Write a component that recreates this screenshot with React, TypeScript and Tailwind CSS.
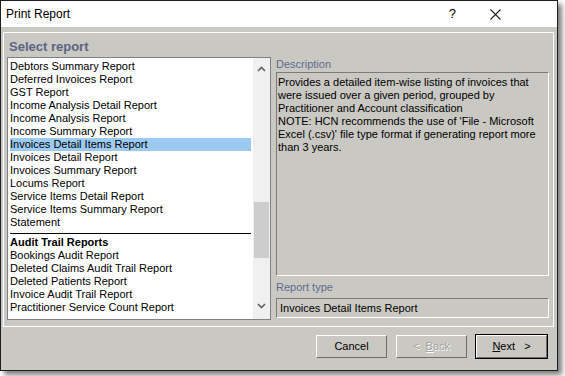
import React from "react";

const items1 = [
  "Debtors Summary Report",
  "Deferred Invoices Report",
  "GST Report",
  "Income Analysis Detail Report",
  "Income Analysis Report",
  "Income Summary Report",
  "Invoices Detail Items Report",
  "Invoices Detail Report",
  "Invoices Summary Report",
  "Locums Report",
  "Service Items Detail Report",
  "Service Items Summary Report",
  "Statement",
];
const items2 = [
  "Bookings Audit Report",
  "Deleted Claims Audit Trail Report",
  "Deleted Patients Report",
  "Invoice Audit Trail Report",
  "Practitioner Service Count Report",
];

const font = { fontFamily: '"Liberation Sans", Arial, sans-serif' };

function Btn({ children, def, disabled }: { children: React.ReactNode; def?: boolean; disabled?: boolean }) {
  return (
    <div
      className={
        "w-[73px] h-[25px] " +
        (def ? "border border-black" : "border border-transparent")
      }
    >
      <div className="w-full h-full border-t border-l border-t-white border-l-white border-b border-r border-b-[#6d6d6d] border-r-[#6d6d6d] flex items-center justify-center text-[11px] leading-[13px]">
        <span className={disabled ? "text-[#a3a3a0] [text-shadow:1px_1px_0_#ffffff]" : "text-black"}>{children}</span>
      </div>
    </div>
  );
}

export default function App() {
  return (
    <div className="w-[565px] h-[376px] bg-white" style={font}>
      <div className="w-[558px] h-[371px] border border-[#1e1e1e] bg-[#c9c8c2] shadow-[4px_4px_5px_rgba(0,0,0,0.5)] flex flex-col">
        {/* Title bar */}
        <div className="h-[26px] bg-white flex items-center text-[12px] text-black">
          <span className="ml-[5px]">Print Report</span>
          <span className="ml-auto mr-[34px] text-[13px]">?</span>
          <svg width="11" height="11" viewBox="0 0 11 11" className="mr-[56px]">
            <path d="M0.5 0.5 L10.5 10.5 M10.5 0.5 L0.5 10.5" stroke="#222" strokeWidth="1.1" />
          </svg>
        </div>
        <div className="pt-[5px] px-[2px]">
          {/* Panel */}
          <div className="w-[551px] h-[295px] border border-white flex flex-col">
            <div className="h-[24px] pt-[6px] pl-[5px] text-[13px] leading-[16px] font-bold text-[#5a6483]">
              Select report
            </div>
            <div className="flex pl-[3px] gap-[5px]">
              {/* List */}
              <div className="w-[264px] h-[263px] border border-[#7f8287] bg-white flex">
                <div className="flex-1 overflow-hidden pl-[2px] pr-[2px] pt-[2px] text-[11px] leading-[13px] text-black">
                  {items1.map((t) => (
                    <div
                      key={t}
                      className={"h-[13px] whitespace-nowrap " + (t === "Invoices Detail Items Report" ? "bg-[#9ccaf3]" : "")}
                    >
                      {t}
                    </div>
                  ))}
                  <div className="h-[7px] pt-[4px]">
                    <div className="h-px bg-black" />
                  </div>
                  <div className="h-[13px] font-bold whitespace-nowrap">Audit Trail Reports</div>
                  {items2.map((t) => (
                    <div key={t} className="h-[13px] whitespace-nowrap">
                      {t}
                    </div>
                  ))}
                </div>
                <div className="w-[17px] bg-[#f0f0f0] flex flex-col items-center">
                  <svg width="9" height="6" viewBox="0 0 9 6" className="mt-[8px]">
                    <path d="M1 5 L4.5 1.5 L8 5" stroke="#606060" strokeWidth="1.6" fill="none" />
                  </svg>
                  <div className="w-[15px] h-[56px] bg-[#cdcdcd] mt-[130px]" />
                  <svg width="9" height="6" viewBox="0 0 9 6" className="mt-[45px]">
                    <path d="M1 1 L4.5 4.5 L8 1" stroke="#606060" strokeWidth="1.6" fill="none" />
                  </svg>
                </div>
              </div>
              {/* Right column */}
              <div className="w-[273px] flex flex-col text-[11px] leading-[13px]">
                <div className="h-[15px] pt-[1px] text-[#5f6c8f]">Description</div>
                <div className="h-[204px] border-t border-l border-t-[#7b7b7b] border-l-[#7b7b7b] border-b border-r border-b-white border-r-white pl-[1px] pt-[3px] text-black whitespace-nowrap">
                  <div>Provides a detailed item-wise listing of invoices that</div>
                  <div>were issued over a given period, grouped by</div>
                  <div>Practitioner and Account classification</div>
                  <div>NOTE: HCN recommends the use of 'File - Microsoft</div>
                  <div>Excel (.csv)' file type format if generating report more</div>
                  <div>than 3 years.</div>
                </div>
                <div className="h-[22px] flex items-center text-[#5f6c8f]">Report type</div>
                <div className="h-[20px] border-t border-l border-t-[#7b7b7b] border-l-[#7b7b7b] border-b border-r border-b-white border-r-white pl-[3px] flex items-center text-black">
                  Invoices Detail Items Report
                </div>
              </div>
            </div>
          </div>
        </div>
        {/* Buttons */}
        <div className="mt-[7px] flex justify-end gap-[7px] pr-[9px]">
          <Btn>Cancel</Btn>
          <Btn disabled>
            &lt;&nbsp;&nbsp;<span className="underline">B</span>ack
          </Btn>
          <Btn def>
            <span className="underline">N</span>ext&nbsp;&nbsp;&nbsp;&gt;
          </Btn>
        </div>
      </div>
    </div>
  );
}
